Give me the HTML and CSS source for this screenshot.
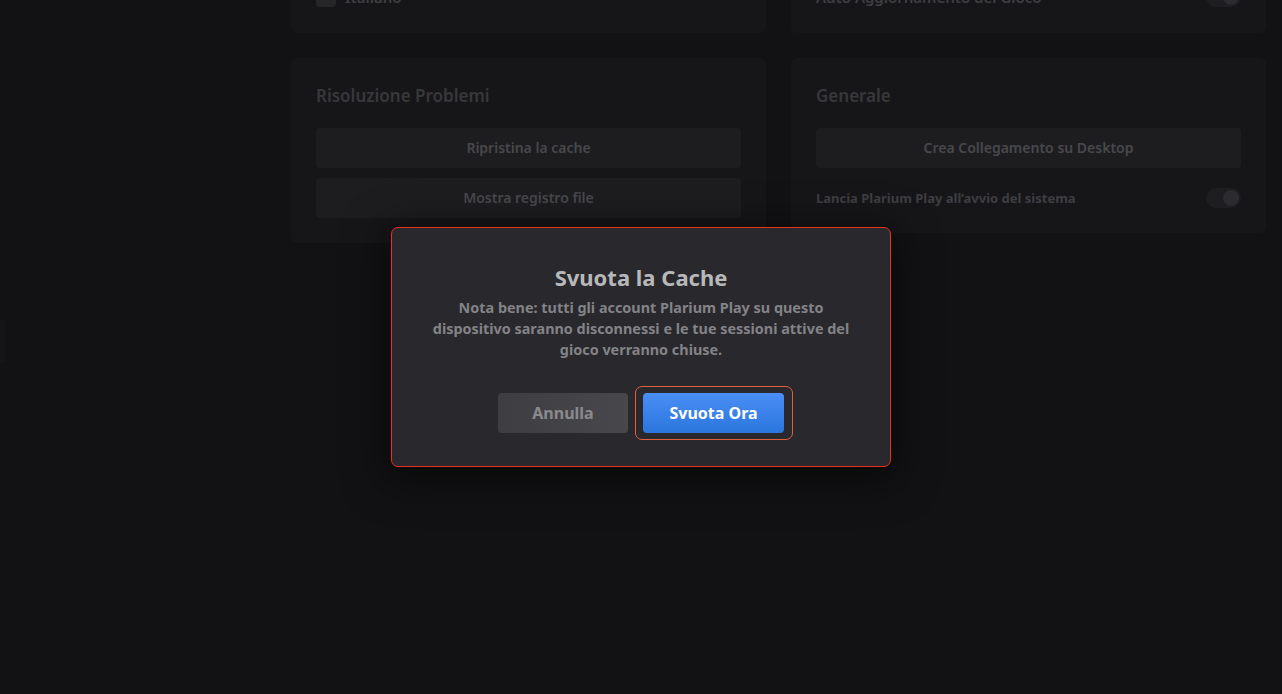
FILE: index.html
```html
<!DOCTYPE html>
<html>
<head>
    <meta charset="utf-8">
    <meta name="viewport" content="width=device-width, initial-scale=1.0">
    <title>Impostazioni</title>
    <link rel="stylesheet" href="styles.css">
</head>
<body>
    <div class="sideTab"></div>
    <div class="settings">
        <div class="card topCard">
            <div class="row">
                <span class="check"></span>
                <span class="rowLabel big">Italiano</span>
            </div>
        </div>
        <div class="card topCard">
            <div class="row spread">
                <span class="rowLabel big">Auto Aggiornamento del Gioco</span>
                <span class="toggle"></span>
            </div>
        </div>

        <div class="card">
            <div class="cardTitle">Risoluzione Problemi</div>
            <div class="btnList">
                <div class="flatBtn">Ripristina la cache</div>
                <div class="flatBtn">Mostra registro file</div>
            </div>
        </div>
        <div class="card">
            <div class="cardTitle">Generale</div>
            <div class="btnList">
                <div class="flatBtn">Crea Collegamento su Desktop</div>
            </div>
            <div class="row spread toggleRow">
                <span class="rowLabel">Lancia Plarium Play all’avvio del sistema</span>
                <span class="toggle"></span>
            </div>
        </div>
    </div>

    <div class="dialog">
        <div class="dialogTitle">Svuota la Cache</div>
        <div class="dialogText">Nota bene: tutti gli account Plarium Play su questo<br>dispositivo saranno disconnessi e le tue sessioni attive del<br>gioco verranno chiuse.</div>
        <div class="dialogBtns">
            <div class="btn cancelBtn">Annulla</div>
            <div class="btn confirmBtn">Svuota Ora</div>
        </div>
    </div>
</body>
</html>
```

FILE: styles.css
```css
html, body{
    margin: 0;
    padding: 0;
    height: 100%;
    overflow: hidden;
}
body{
    background-color: #121214;
    font-family: "Noto Sans", "Open Sans", sans-serif;
    position: relative;
}
.sideTab{
    position: absolute; left: 0; top: 320px; width: 5px; height: 42px;
    background-color: #151517;
}
.settings{
    display: grid;
    grid-template-columns: 475px 475px;
    gap: 25px;
    align-items: start;
    padding-left: 291px;
    margin-top: -33px;
}
.card{
    background-color: #161618;
    border-radius: 6px;
    padding: 25px;
}
.topCard{
    padding: 20px 25px 26px;
}
.row{
    display: flex;
    align-items: center;
    height: 20px;
}
.spread{
    justify-content: space-between;
}
.check{
    width: 20px; height: 20px; border-radius: 4px;
    background-color: #262629;
    margin-right: 9px;
}
.rowLabel{
    color: #3e3e42;
    font-size: 13px;
    font-weight: 700;
}
.rowLabel.big{
    font-size: 15px;
    font-weight: 600;
}
.toggle{
    width: 35px; height: 20px; border-radius: 10px;
    background-color: #1e1e21;
    position: relative;
}
.toggle::after{
    content: "";
    position: absolute; right: 2px; top: 2px; width: 16px; height: 16px;
    border-radius: 50%;
    background-color: #2c2c30;
}
.cardTitle{
    color: #38383b;
    font-size: 17px;
    font-weight: 600;
    line-height: 26px;
    margin-bottom: 19px;
}
.btnList{
    display: flex;
    flex-direction: column;
    gap: 10px;
}
.flatBtn{
    height: 40px;
    line-height: 40px;
    text-align: center;
    border-radius: 4px;
    background-color: #1d1d20;
    color: #48484b;
    font-size: 14px;
    font-weight: 600;
}
.toggleRow{
    margin-top: 20px;
}

.dialog{
    position: absolute;
    left: 391px; top: 227px;
    width: 500px; height: 240px;
    box-sizing: border-box;
    border: 1px solid #e8301a;
    border-radius: 7px;
    background-color: #29282d;
    box-shadow: 0 8px 40px 6px rgba(0,0,0,0.5);
    padding: 34px 10px 0;
    text-align: center;
}
.dialogTitle{
    color: #b8b8ba;
    font-size: 22px;
    font-weight: 700;
    line-height: 30px;
}
.dialogText{
    color: #838387;
    font-size: 14.4px;
    font-weight: 700;
    line-height: 21px;
    margin-top: 5px;
}
.dialogBtns{
    display: flex;
    justify-content: center;
    gap: 15px;
    margin-top: 33px;
}
.btn{
    height: 40px;
    line-height: 40px;
    border-radius: 4px;
    font-size: 16px;
    font-weight: 700;
    position: relative;
}
.cancelBtn{
    width: 130px;
    background: linear-gradient(to right, #3e3e42, #48484c);
    color: #8a8a8d;
}
.confirmBtn{
    width: 141px;
    background: linear-gradient(to bottom, #4a8ef6, #2a76dc);
    color: #ffffff;
}
.confirmBtn::after{
    content: "";
    position: absolute;
    top: -7px; bottom: -7px; left: -8px; right: -9px;
    border: 1.5px solid #e0603e;
    border-radius: 7px;
}
```
